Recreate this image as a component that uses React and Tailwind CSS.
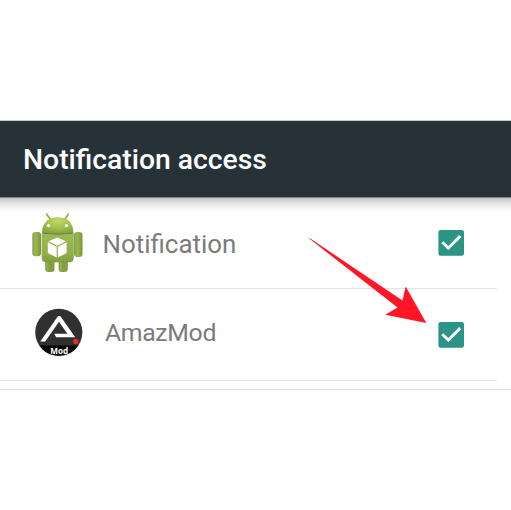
function Checkbox() {
  return (
    <svg className="block h-[26px] w-[26px]" viewBox="0 0 26 26" role="img" aria-label="Enabled">
      <rect x="0.4" y="0" width="25.6" height="25.7" rx="2.2" fill="#2a9487" />
      <path d="M4.3 12.3 L10.3 18 L22.3 6.1" fill="none" stroke="#fff" strokeWidth="2.9" />
    </svg>
  );
}

function AndroidIcon() {
  return (
    <svg className="block h-[62px] w-[56px]" viewBox="0 0 56 62" aria-hidden="true">
      <defs>
        <linearGradient id="body" x1="0" y1="0" x2="0" y2="1">
          <stop offset="0" stopColor="#9dba50" />
          <stop offset="0.75" stopColor="#8fae48" />
          <stop offset="1" stopColor="#7f9c3e" />
        </linearGradient>
        <linearGradient id="limb" x1="0" y1="0" x2="1" y2="0">
          <stop offset="0" stopColor="#85a143" />
          <stop offset="0.4" stopColor="#9ab751" />
          <stop offset="1" stopColor="#78943b" />
        </linearGradient>
        <radialGradient id="head" cx="0.5" cy="0.2" r="0.75">
          <stop offset="0" stopColor="#bfd967" />
          <stop offset="0.6" stopColor="#a1bf4a" />
          <stop offset="1" stopColor="#86a440" />
        </radialGradient>
      </defs>
      <path d="M14.7 2.2 L18.5 7.5 M36.3 2.2 L32.7 7.5" stroke="#93ad4b" strokeWidth="1.7" strokeLinecap="round" />
      <path d="M13.2 47 H22.5 V57 Q22.5 60 19.5 60 H16.5 Q13.2 60 13.2 57Z M26.6 47 H35.8 V57 Q35.8 60 32.5 60 H29.6 Q26.6 60 26.6 57Z" fill="#819e40" />
      <path d="M15.5 50 V59 M29 50 V59" stroke="#94b04d" strokeWidth="2" />
      <rect x="0.3" y="20" width="8.8" height="24.3" rx="3.2" fill="url(#limb)" />
      <rect x="42" y="20" width="8.5" height="25" rx="3.2" fill="url(#limb)" />
      <path d="M10 20.8 C10 10 17 5.2 25.8 5.2 S41.4 10 41.4 20.8 C36 22.8 16 22.8 10 20.8Z" fill="url(#head)" />
      <circle cx="16.5" cy="13.5" r="1.6" fill="#fff" />
      <circle cx="34.5" cy="13.5" r="1.6" fill="#fff" />
      <path d="M9.7 21.5 Q26 24 41.8 21.5 V46 Q41.8 50.2 37 50.2 H14.5 Q9.7 50.2 9.7 46Z" fill="url(#body)" />
      <path d="M10 21 Q26 23.6 41.6 21" fill="none" stroke="#5f7838" strokeWidth="1.1" />
      <path d="M25.3 25.4 L34 29.3 L25.3 33.7 L16.6 29.3Z" fill="#fff" />
      <path d="M15.8 30.3 L24.7 34.8 V45.4 L15.8 41Z M25.9 34.8 L34.6 30.3 V41 L25.9 45.4Z" fill="#fff" />
    </svg>
  );
}

function AmazModIcon() {
  return (
    <svg className="block h-[50px] w-[50px]" viewBox="0 0 50 50" role="img" aria-label="AmazMod">
      <defs>
        <clipPath id="disc"><circle cx="24.8" cy="24.3" r="23.5" /></clipPath>
      </defs>
      <circle cx="24.8" cy="24.9" r="24" fill="#e2e2e2" />
      <g clipPath="url(#disc)">
        <rect width="50" height="50" fill="#303030" />
        <rect y="37.5" width="50" height="12" fill="#050505" />
      </g>
      <path d="M6.3 33.5 L24 8 H26.3 L41.2 29.3 H22.2 L20.2 25.7 H33.3 L25 13.7 L11.2 33.5Z" fill="#fff" />
      <circle cx="41.8" cy="33.5" r="2.7" fill="#e62d22" />
      <text x="25.3" y="45.5" textAnchor="middle" fill="#fff" textLength="18" lengthAdjust="spacingAndGlyphs" className="font-['Open_Sans',sans-serif] text-[9px] font-bold">Mod</text>
    </svg>
  );
}

export default function App() {
  return (
    <main className="relative h-[510px] w-[511px] overflow-hidden bg-white pt-[120px] font-[Roboto,sans-serif]">
      <header className="flex h-[78px] items-center border-t border-b border-t-[#c7cccd] border-b-[#7d8587] bg-[#273238] pt-0.5 pl-[23px]">
        <h1 className="text-[28.3px] leading-8 font-medium whitespace-nowrap text-white">Notification access</h1>
      </header>
      <div className="h-[14px] bg-linear-to-b from-[#c5c5c5] via-[#ededed] to-white" />
      <ul>
        <li className="flex h-[77px] w-[497px] border-b border-[#e3e3e3] pl-8">
          <div className="w-[70.5px]"><AndroidIcon /></div>
          <span className="flex-1 pt-4 text-[25.9px] leading-8 text-[#7b7b7b]">Notification</span>
          <div className="mr-[33px] pt-[18px]"><Checkbox /></div>
        </li>
        <li className="flex h-[92px] w-[497px] border-b border-[#e3e3e3] pl-[34px]">
          <div className="w-[71px] pt-[19px]"><AmazModIcon /></div>
          <span className="flex-1 pt-7 text-[24.8px] leading-8 tracking-[-0.35px] text-[#7b7b7b]">AmazMod</span>
          <div className="mr-[33px] pt-[32.5px]"><Checkbox /></div>
        </li>
      </ul>
      <div className="mt-2 border-b border-[#dcdcdc]" />
      <svg className="absolute top-[236px] left-[307px] h-[90px] w-[121px]" viewBox="307 236 121 90" aria-hidden="true">
        <path d="M308.5 238 Q309 237.7 311 239 L402.5 300.5 L405.7 286.5 L426.3 323 L385.3 314.7 L397.5 307.5Z" fill="#ff1728" />
      </svg>
    </main>
  );
}
